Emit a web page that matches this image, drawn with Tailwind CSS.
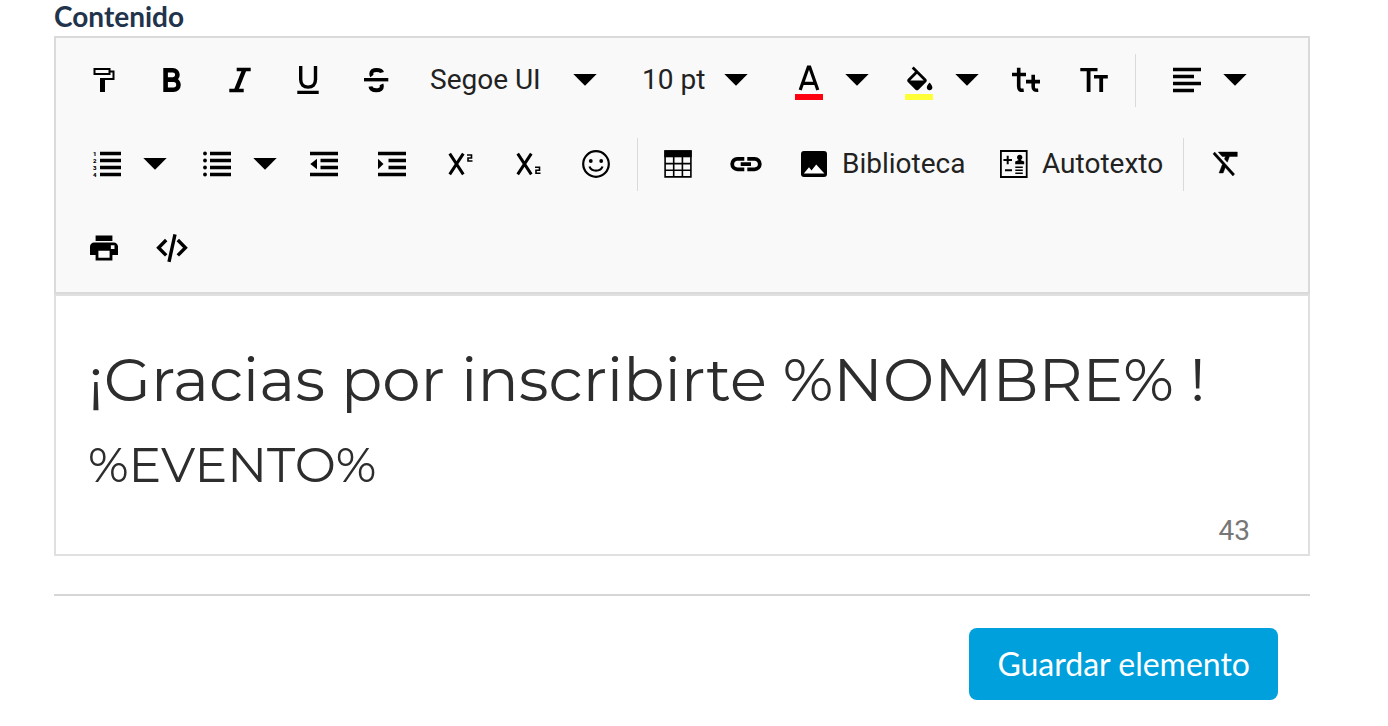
<!DOCTYPE html>
<html lang="es">
<head>
  <meta charset="UTF-8">
  <meta name="viewport" content="width=device-width, initial-scale=1">
  <title>Editar elemento</title>
  <script src="https://cdn.jsdelivr.net/npm/@tailwindcss/browser@4"></script>
</head>
<body class="bg-white font-['Lato',sans-serif]">
  <main class="pl-[54px] pr-[78px]">
    <h2 id="contenido-label" class="mb-1 text-[28px] leading-8 font-bold text-[#22344c]">Contenido</h2>

    <!-- Barra de herramientas -->
    <div role="toolbar" aria-label="Formato" class="flex flex-wrap border-2 border-[#dadada] bg-[#f9f9f9] pl-[14px] pb-[2px] font-['Roboto',sans-serif] text-[28px] text-[#222]">
      <button type="button" aria-label="Copiar formato" class="flex h-21 w-17 items-center justify-center">
        <svg class="size-8" viewBox="0 0 32 32" fill="none" stroke="#000" stroke-width="2"><path d="M6.5 5h15v5h-15z"/><path d="M22 7.5h3.5v7.5H12.5"/><path d="M14.5 14v14" stroke-width="5"/></svg>
      </button>
      <button type="button" aria-label="Negrita" class="flex h-21 w-17 items-center justify-center">
        <svg class="size-8" viewBox="0 0 32 32" fill="none" stroke="#000" stroke-width="4.6"><path d="M9.600 6.200h7.200a4.600 4.600 0 0 1 0 9.300H9.600zM9.600 15.800h7.900a5 5 0 0 1 0 10H9.600z"/></svg>
      </button>
      <button type="button" aria-label="Cursiva" class="flex h-21 w-17 items-center justify-center">
        <svg class="size-8" viewBox="0 0 32 32" fill="none" stroke="#000" stroke-width="3.400"><path d="M12.700 5.500h14M5.300 26.500h14.400"/><path d="M20.200 6L12.200 26" stroke-width="4.400"/></svg>
      </button>
      <button type="button" aria-label="Subrayado" class="flex h-21 w-17 items-center justify-center">
        <svg class="size-8" viewBox="0 0 32 32" fill="none" stroke="#000" stroke-width="3.400"><path d="M8.700 2v13.500c0 5 3 7.600 7.400 7.600s7.400-2.600 7.400-7.600V2M5.300 28.400h21.400"/></svg>
      </button>
      <button type="button" aria-label="Tachado" class="flex h-21 w-17 items-center justify-center">
        <svg class="size-8" viewBox="0 0 32 32" fill="none" stroke="#000" stroke-width="4"><path d="M4 15.700h24.300" stroke-width="3.400"/><path d="M22 8.500C21.500 6.500 19.500 5.900 16.500 5.900c-3.300 0-5.200 1.500-5.200 3.900 0 .9.200 1.600.7 2.200M10.500 22.500c.3 2.800 2.700 3.700 5.700 3.700 3.400 0 5.600-1.400 5.600-3.800 0-.8-.1-1.400-.4-2"/></svg>
      </button>

      <div class="relative w-53">
        <select aria-label="Fuente" class="h-21 w-full appearance-none pl-5">
          <option>Segoe UI</option>
        </select>
        <svg class="pointer-events-none absolute top-9 right-[25px] h-3 w-6" viewBox="0 0 24 12"><path d="M.3 0h23.400L12 11.700z"/></svg>
      </div>
      <div class="relative w-[150px]">
        <select aria-label="Tamaño" class="h-21 w-full appearance-none pl-5">
          <option>10 pt</option>
        </select>
        <svg class="pointer-events-none absolute top-9 right-[24px] h-3 w-6" viewBox="0 0 24 12"><path d="M.3 0h23.400L12 11.700z"/></svg>
      </div>

      <div class="ml-[3px] flex">
        <button type="button" aria-label="Color de texto" class="flex h-21 w-17 items-center justify-center">
          <svg class="size-8 overflow-visible" viewBox="0 0 32 32" fill="none" stroke="#000" stroke-width="3.200"><path d="M7.200 26L15.300 3h1.400L24.800 26M9.500 19.300h13"/><path d="M2 33h28" stroke="#ff0010" stroke-width="6"/></svg>
        </button>
        <button type="button" aria-label="Elegir color de texto" class="flex h-21 w-[39px] items-center pl-[2px]">
          <svg class="h-3 w-6" viewBox="0 0 24 12"><path d="M.3 0h23.400L12 11.700z"/></svg>
        </button>
      </div>
      <div class="ml-[3px] flex">
        <button type="button" aria-label="Color de fondo" class="flex h-21 w-17 items-center justify-center">
          <svg class="size-8 overflow-visible" viewBox="0 0 32 32"><path transform="translate(0 2.500) scale(1.400)" d="M16.560 8.940L7.620 0 6.210 1.410l2.380 2.380-5.150 5.150c-.59.59-.59 1.540 0 2.120l5.500 5.500c.29.29.68.44 1.060.44s.77-.15 1.060-.44l5.500-5.500c.59-.58.59-1.530 0-2.120zM5.210 10L10 5.210 14.790 10H5.210zM19 11.500s-2 2.170-2 3.500c0 1.100.9 2 2 2s2-.9 2-2c0-1.330-2-3.500-2-3.500z"/><path d="M2 30h28v6H2z" fill="#ffff38"/></svg>
        </button>
        <button type="button" aria-label="Elegir color de fondo" class="flex h-21 w-[39px] items-center pl-[2px]">
          <svg class="h-3 w-6" viewBox="0 0 24 12"><path d="M.3 0h23.400L12 11.700z"/></svg>
        </button>
      </div>
      <button type="button" aria-label="Minúsculas" class="flex h-21 w-17 items-center justify-center">
        <svg class="size-8" viewBox="0 0 32 32" fill="none" stroke="#000" stroke-width="3.600"><path d="M8.700 3.700v18.600c0 3 1 4.300 5 3.900M2 10.500h14M23.200 10.700v12c0 2.800 1.300 3.800 5 3.500M16 17.600h14"/></svg>
      </button>
      <button type="button" aria-label="Mayúsculas" class="flex h-21 w-17 items-center justify-center">
        <svg class="size-8" viewBox="0 0 32 32" fill="none" stroke="#000" stroke-width="3.400"><path d="M2.300 5.600h17.200M16 12.700h13.800"/><path d="M10.600 5v23M23.200 12v16" stroke-width="3.800"/></svg>
      </button>
      <span class="mx-[7px] h-[53px] w-px self-center bg-[#dadada]"></span>

      <div class="ml-[10px] flex">
        <button type="button" aria-label="Alinear" class="flex h-21 w-17 items-center justify-center">
          <svg class="size-8" viewBox="0 0 32 32" stroke="#000" stroke-width="3.400"><path d="M2 5.500h28M2 12.500h21M2 19.500h28M2 26.500h21"/></svg>
        </button>
        <button type="button" aria-label="Opciones de alineación" class="flex h-21 w-[39px] items-center pl-[2px]">
          <svg class="h-3 w-6" viewBox="0 0 24 12"><path d="M.3 0h23.400L12 11.700z"/></svg>
        </button>
      </div>
      <div class="ml-[3px] flex">
        <button type="button" aria-label="Lista numerada" class="flex h-21 w-17 items-center justify-center">
          <svg class="size-8" viewBox="0 0 32 32"><path d="M9 5.500h21M9 12.500h21M9 19.500h21M9 26.500h21" stroke="#000" stroke-width="3.400"/><g font-family="Roboto, sans-serif" font-size="6" font-weight="900"><text x="2" y="7.500">1</text><text x="2" y="14.500">2</text><text x="2" y="21.500">3</text><text x="2" y="28.500">4</text></g></svg>
        </button>
        <button type="button" aria-label="Opciones de lista numerada" class="flex h-21 w-[39px] items-center pl-[2px]">
          <svg class="h-3 w-6" viewBox="0 0 24 12"><path d="M.3 0h23.400L12 11.700z"/></svg>
        </button>
      </div>
      <div class="ml-[3px] flex">
        <button type="button" aria-label="Lista con viñetas" class="flex h-21 w-17 items-center justify-center">
          <svg class="size-8" viewBox="0 0 32 32"><path d="M9 5.500h21M9 12.500h21M9 19.500h21M9 26.500h21" stroke="#000" stroke-width="3.400"/><circle cx="4" cy="5.500" r="1.900"/><circle cx="4" cy="12.500" r="1.900"/><circle cx="4" cy="19.500" r="1.900"/><circle cx="4" cy="26.500" r="1.900"/></svg>
        </button>
        <button type="button" aria-label="Opciones de viñetas" class="flex h-21 w-[39px] items-center pl-[2px]">
          <svg class="h-3 w-6" viewBox="0 0 24 12"><path d="M.3 0h23.400L12 11.700z"/></svg>
        </button>
      </div>
      <button type="button" aria-label="Reducir sangría" class="flex h-21 w-17 items-center justify-center">
        <svg class="size-8" viewBox="0 0 32 32"><path d="M2 5.500h28M12.500 12.500H30M12.500 19.500H30M2 26.500h28" stroke="#000" stroke-width="3.400"/><path d="M9 10.700v10.600L2.300 16z"/></svg>
      </button>
      <button type="button" aria-label="Aumentar sangría" class="flex h-21 w-17 items-center justify-center">
        <svg class="size-8" viewBox="0 0 32 32"><path d="M2 5.500h28M12.500 12.500H30M12.500 19.500H30M2 26.500h28" stroke="#000" stroke-width="3.400"/><path d="M2 10.700v10.600L7.500 16z"/></svg>
      </button>
      <button type="button" aria-label="Superíndice" class="flex h-21 w-17 items-center justify-center">
        <svg class="size-8" viewBox="0 0 32 32" fill="none" stroke="#000"><path d="M5.700 5.700l13.600 20.600M19.300 5.700L5.700 26.300" stroke-width="3"/><path d="M23 7h4.500v3H24v3h4.500" stroke-width="1.600"/></svg>
      </button>
      <button type="button" aria-label="Subíndice" class="flex h-21 w-17 items-center justify-center">
        <svg class="size-8" viewBox="0 0 32 32" fill="none" stroke="#000"><path d="M5.700 5.700l13.600 20.600M19.300 5.700L5.700 26.300" stroke-width="3"/><path d="M23 19.300h4.500v3H24v3h4.500" stroke-width="1.600"/></svg>
      </button>
      <button type="button" aria-label="Emoticono" class="flex h-21 w-17 items-center justify-center">
        <svg class="size-8" viewBox="0 0 32 32"><g fill="none" stroke="#000" stroke-width="2.200"><circle cx="16" cy="16" r="12.800"/><path d="M9.500 18.500c1 2.800 3.500 4.200 6.500 4.200s5.500-1.400 6.500-4.200"/></g><circle cx="10.800" cy="13" r="1.900"/><circle cx="21.200" cy="13" r="1.900"/></svg>
      </button>
      <span class="mr-[6px] ml-[7px] h-[53px] w-px self-center bg-[#dadada]"></span>

      <button type="button" aria-label="Insertar tabla" class="flex h-21 w-17 items-center justify-center">
        <svg class="size-8" viewBox="0 0 32 32"><path d="M2.300 2.300h27.400v7H2.300z"/><path d="M3.100 3.100h25.800v25.800H3.100zM3 15.600h26M3 22.200h26M11.700 9v20M20.400 9v20" fill="none" stroke="#000" stroke-width="1.600"/></svg>
      </button>
      <button type="button" aria-label="Insertar enlace" class="flex h-21 w-17 items-center justify-center">
        <svg class="size-8" viewBox="0 0 32 32" fill="none" stroke="#000" stroke-width="3.800"><path d="M14.300 21.300H7.400a5.200 5.200 0 0 1 0-10.400h6.900M17.300 10.900h7.300a5.200 5.200 0 0 1 0 10.400h-7.300M10.700 16.100H21"/></svg>
      </button>
      <button type="button" class="flex h-21 w-50 items-center gap-3 pl-[18px]">
        <svg class="size-8" viewBox="0 0 32 32"><rect x="3" y="3" width="26" height="26" rx="3"/><path d="M5.800 25.500l5.200-6.300 2.500 3.200 4.700-6 8.200 9.100z" fill="#fff"/></svg>
        Biblioteca
      </button>
      <button type="button" class="flex h-21 w-[203px] items-center gap-3 pl-[18px]">
        <svg class="size-8" viewBox="0 0 32 32"><g fill="none" stroke="#000" stroke-width="1.800"><path d="M2.900 3h25.800v26H2.900z"/><path d="M5.400 12H14M9.700 7.700v8.600M7 22.300h7" stroke-width="2"/><path d="M17.300 19.300h7.500M17.300 22.300h7.500M17.300 25.300h7.500" stroke-width="1.500"/></g><circle cx="21.700" cy="9.300" r="2.600"/><path d="M20.500 10h2.400v2.200l3.300 1.200v2.800h-9v-2.800l3.300-1.200z"/></svg>
        Autotexto
      </button>
      <span class="mr-[7px] h-[53px] w-px self-center bg-[#dadada]"></span>
      <button type="button" aria-label="Borrar formato" class="flex h-21 w-17 items-center justify-center">
        <svg class="size-8" viewBox="0 0 32 32"><path stroke="#000" stroke-width=".3" transform="translate(1.300 -3.500) scale(1.350 1.500)" d="M3.270 5L2 6.270l6.970 6.970L6.500 19h3l1.570-3.660L16.730 21 18 19.730 3.550 5.270 3.270 5zM6 5v.18L8.820 8h2.400l-.72 1.680 2.100 2.100L14.210 8H20V5H6z"/></svg>
      </button>
      <button type="button" aria-label="Imprimir" class="flex h-21 w-17 items-center justify-center">
        <svg class="size-8" viewBox="0 0 32 32"><path transform="translate(-.8 -.8) scale(1.400)" d="M19 8H5c-1.660 0-3 1.340-3 3v6h4v4h12v-4h4v-6c0-1.660-1.340-3-3-3zm-3 11H8v-5h8v5zm3.500-6.300h-2.600v-2.600h2.600zM18 3H6v4h12V3z"/></svg>
      </button>
      <button type="button" aria-label="Código fuente" class="flex h-21 w-17 items-center justify-center">
        <svg class="size-8" viewBox="0 0 32 32" fill="none" stroke="#000" stroke-width="3.400"><path d="M10.200 8L2.600 15.700l7.600 7.700M21.800 8l7.600 7.700-7.600 7.700M19 2.300L13 29.800"/></svg>
      </button>
    </div>

    <!-- Área de edición -->
    <div class="border-2 border-[#e0e0e0]">
      <div contenteditable="true" role="textbox" aria-multiline="true" aria-labelledby="contenido-label" class="px-8 pt-[43px] font-['Montserrat','Open_Sans',sans-serif] text-[#2d2d2d] outline-none">
        <p class="text-[61px] leading-20">¡Gracias por inscribirte %NOMBRE% !</p>
        <p class="text-[49px] leading-[92px]">%EVENTO%</p>
      </div>
      <div class="pt-1 pr-[58px] pb-[7px] text-right font-['Roboto',sans-serif] text-[28px] leading-8 text-[#777]">43</div>
    </div>

    <hr class="mt-[38px] border-t-2 border-[#d6d6d6]">
    <div class="mt-8 flex justify-end pr-8">
      <button type="button" class="h-18 rounded-lg bg-[#00a0dc] px-7 text-[32px] text-white">Guardar elemento</button>
    </div>
  </main>
</body>
</html>
